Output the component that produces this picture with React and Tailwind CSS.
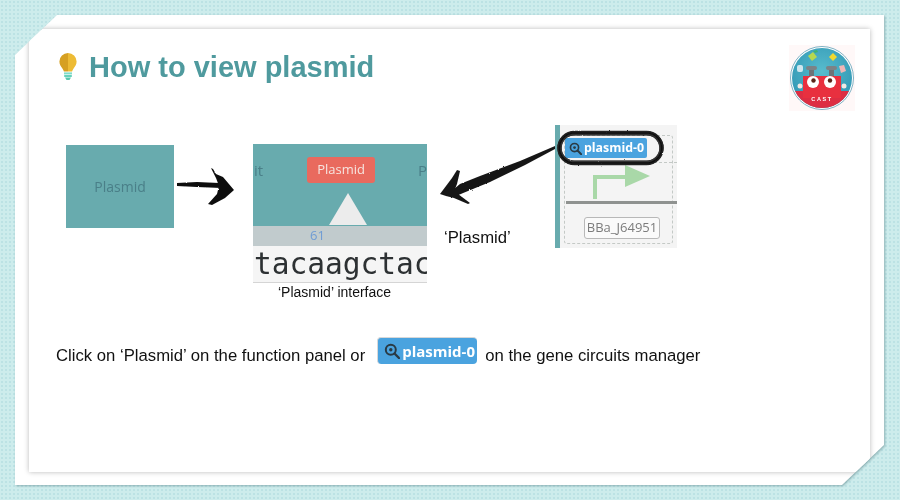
// How to view plasmid: tutorial slide with a framed white panel

const sans = 'font-["Liberation_Sans",Arial,sans-serif]';

function Bulb() {
  return (
    <svg viewBox="0 0 18 28" className="w-[18px] h-[28px] shrink-0">
      <path d="M9 0a8.600 8.600 0 0 0-8.600 8.600c0 3.200 1.700 5 3 6.800.9 1.200 1.300 2.300 1.500 3.200H9z" fill="#d6a022" />
      <path d="M9 0a8.600 8.600 0 0 1 8.600 8.600c0 3.200-1.700 5-3 6.800-.9 1.200-1.300 2.300-1.500 3.200H9z" fill="#edbb35" />
      <rect x="5" y="19.400" width="8" height="2" fill="#7fdcc8" />
      <rect x="5.200" y="22" width="7.600" height="2" fill="#67d2bb" />
      <path d="M6 24.600h6L10.500 27h-3z" fill="#58c8ae" />
    </svg>
  );
}

function Logo() {
  return (
    <svg viewBox="0 0 66 66" className="w-[66px] h-[66px] shrink-0 bg-[#fff8f8]">
      <defs>
        <clipPath id="logo-disc">
          <circle cx="33" cy="33" r="30" />
        </clipPath>
        <radialGradient id="logo-sky" cx="0.5" cy="0.4" r="0.6">
          <stop offset="0" stopColor="#58bccd" />
          <stop offset="1" stopColor="#2f95b3" />
        </radialGradient>
      </defs>
      <circle cx="33" cy="33" r="31.500" fill="#fff" stroke="#7fb2c4" strokeWidth="1" />
      <g clipPath="url(#logo-disc)">
        <rect width="66" height="66" fill="url(#logo-sky)" />
        <rect y="46" width="66" height="20" fill="#dd2e43" />
        <rect x="20" y="24" width="5" height="10" fill="#6d7378" />
        <rect x="40" y="24" width="5" height="10" fill="#6d7378" />
        <rect x="17" y="21" width="11" height="4" rx="2" fill="#7c8286" />
        <rect x="37" y="21" width="11" height="4" rx="2" fill="#7c8286" />
        <rect x="14" y="31" width="38" height="22" fill="#e8303f" />
        <circle cx="11" cy="41" r="2.500" fill="#f1e9e4" />
        <circle cx="55" cy="41" r="2.500" fill="#f1e9e4" />
        <circle cx="24" cy="37" r="6" fill="#fff" />
        <circle cx="41" cy="37" r="6" fill="#fff" />
        <circle cx="24.500" cy="35.500" r="2.200" fill="#5a2418" />
        <circle cx="41" cy="35.500" r="2.200" fill="#5a2418" />
        <path d="M19 11l5-4 4 5-5 4z" fill="#b5d84f" />
        <path d="M24 6l4-1 1 2-3 1z" fill="#3cb371" />
        <path d="M40 12l4-4 4 4-4 4z" fill="#f1d92f" />
        <path d="M50 21l5-1 2 6-5 2z" fill="#efb6b6" />
        <rect x="8" y="20" width="6" height="7" rx="2" fill="#cfe6ee" />
      </g>
      <text x="33" y="56" textAnchor="middle" fontSize="5.500" fontWeight="700" letterSpacing="1.600" fill="#fff" fontFamily="Liberation Sans, sans-serif">
        CAST
      </text>
    </svg>
  );
}

// Shared roughness for the hand-drawn marks
function RoughFilter({ id }) {
  return (
    <filter id={id} x="-10%" y="-10%" width="120%" height="120%">
      <feTurbulence type="fractalNoise" baseFrequency="0.35" numOctaves="2" seed="4" />
      <feDisplacementMap in="SourceGraphic" scale="1.800" />
      <feGaussianBlur stdDeviation="0.3" />
    </filter>
  );
}

function ArrowRight() {
  return (
    <svg viewBox="0 0 60 42" className="w-[60px] h-[42px] shrink-0 mt-[40px] ml-[3px]">
      <defs>
        <RoughFilter id="rough-a" />
      </defs>
      <g filter="url(#rough-a)" fill="#111">
        <path d="M0 18l20-1 22 1 3 2-1 3-24-1-20-1z" />
        <path d="M34 3l2 1 3 5 7 3 11 13-9 8-13 7-4-1 9-10 2-8-3-8z" />
      </g>
    </svg>
  );
}

function ArrowLeft() {
  return (
    <svg viewBox="0 0 116 60" className="absolute left-[-115px] top-[21px] w-[116px] h-[60px]">
      <defs>
        <RoughFilter id="rough-b" />
      </defs>
      <g filter="url(#rough-b)" fill="#161616">
        <path d="M115 0L80 15 40 30 20 38l-6 5 2 7 12-5 22-9 35-17 30-16z" />
        <path d="M0 48l12-16 5-8 3 1-3 13-2 5 3 5 12 9-2 1-14-6-8-2z" />
      </g>
    </svg>
  );
}

function LensIcon({ size }) {
  return (
    <svg viewBox="0 0 16 16" width={size} height={size} className="shrink-0">
      <circle cx="6.800" cy="6.800" r="5" fill="none" stroke="#2a3a44" strokeWidth="2" />
      <circle cx="6.800" cy="6.800" r="1.700" fill="#2a3a44" />
      <path d="M10.500 10.500L15 15" stroke="#2a3a44" strokeWidth="2.400" strokeLinecap="round" />
    </svg>
  );
}

function GeneCard() {
  return (
    <div className="relative w-[122px] h-[123px] bg-[#f4f4f4] border-l-[5px] border-[#68abae] blur-[0.4px] overflow-hidden">
      <div className="absolute inset-x-[4px] top-[10px] bottom-[4px] border border-dashed border-[#c4c9c6] rounded-[3px]" />
      <div className="absolute left-[4px] right-0 top-[37px] border-t border-dashed border-[#c4c9c6]" />
      <div className="relative ml-[5px] mt-[13px] w-[82px] h-[20px] bg-[#4aa3df] flex items-center gap-[2px] pl-[4px] text-white text-[12.400px] font-bold whitespace-nowrap font-['Open_Sans',sans-serif] rounded-[2px]">
        <LensIcon size={13} />
        <span>plasmid-0</span>
      </div>
      <svg viewBox="0 0 117 50" className="relative w-[117px] h-[50px]">
        <path d="M35 41V19h30" fill="none" stroke="#a9d8a8" strokeWidth="4" />
        <path d="M65 7l25 11-25 11z" fill="#a9d8a8" />
        <rect x="6" y="43" width="111" height="3" fill="#8f9290" />
      </svg>
      <div className="relative ml-[24px] mt-[9px] w-[76px] h-[22px] border border-[#b8b8b8] rounded-[3px] flex items-center justify-center text-[13px] text-[#7c7c7c] bg-[#fafafa] font-['Open_Sans',sans-serif]">
        BBa_J64951
      </div>
    </div>
  );
}

function Scribble() {
  return (
    <svg viewBox="0 0 112 38" className="absolute left-0 top-[4px] w-[112px] h-[38px]">
      <defs>
        <RoughFilter id="rough-c" />
      </defs>
      <g filter="url(#rough-c)" fill="none">
        <rect x="4.500" y="4.500" width="102" height="29" rx="14.500" stroke="#111" strokeWidth="4" />
        <rect x="3" y="2.500" width="105" height="33" rx="16.500" stroke="#222" strokeWidth="1.500" />
        <rect x="6" y="5.500" width="99" height="27" rx="13.500" stroke="#333" strokeWidth="1.500" />
      </g>
    </svg>
  );
}

export default function App() {
  return (
    <div className={`w-[900px] h-[500px] overflow-hidden pt-[15px] pl-[15px] ${sans} bg-[#cdecec] bg-[radial-gradient(circle,#bce2e4_1.100px,transparent_1.300px)] bg-[length:4px_4px]`}>
      <div className="w-[869px] h-[470px] drop-shadow-[1px_1px_1px_rgba(90,130,135,0.55)]">
        {/* white mat with two clipped corners */}
        <div className="w-full h-full bg-white p-[14px] [clip-path:polygon(42px_0,100%_0,100%_430px,827px_100%,0_100%,0_40px)]">
          <div className="w-[841px] h-[443px] bg-white shadow-[0_0_5px_rgba(0,0,0,0.28)] flex flex-col">
            {/* Title row */}
            <div className="flex items-start pl-[30px] pt-[16px] pr-[15px] h-[96px]">
              <div className="flex items-center mt-[4px]">
                <Bulb />
                <h1 className="ml-[12px] text-[29px] leading-[36px] font-bold text-[#4f9a9e]">How to view plasmid</h1>
              </div>
              <div className="ml-auto">
                <Logo />
              </div>
            </div>

            {/* Diagram row */}
            <div className="flex items-start pl-[37px]">
              <div className="w-[108px] h-[83px] mt-[20px] bg-[#68abae] flex items-center justify-center text-[14px] text-[#4a7f88] font-['Open_Sans',sans-serif] blur-[0.4px]">
                Plasmid
              </div>

              <ArrowRight />

              <div className="w-[174px] mt-[19px] ml-[16px] flex flex-col items-center">
                <div className="w-full h-[82px] bg-[#68abae] overflow-hidden flex flex-col items-center blur-[0.4px]">
                  <div className="w-full mt-[13px] flex items-center justify-between text-[15px] text-[#4a7f88] font-['Open_Sans',sans-serif]">
                    <span className="ml-[1px]">it</span>
                    <span className="ml-[1px] w-[68px] h-[26px] bg-[#e96a5e] rounded-[3px] text-[13px] text-[#f6e4df] flex items-center justify-center">
                      Plasmid
                    </span>
                    <span className="mr-[0px]">P</span>
                  </div>
                  <svg viewBox="0 0 38 33" className="w-[38px] h-[33px] mt-[10px] ml-[16px] shrink-0">
                    <path d="M19 0l19 32H0z" fill="#ececec" />
                  </svg>
                </div>
                <div className="w-full h-[20px] bg-[#c1cbcd] flex items-center pl-[57px] text-[13px] text-[#6f9cd4] font-['Open_Sans',sans-serif] blur-[0.4px]">
                  61
                </div>
                <div className="w-full h-[37px] bg-[#f5f5f5] border-b border-[#d5d5d5] pl-[1px] overflow-hidden whitespace-nowrap text-[29.500px] leading-[36px] text-[#2d3133] font-['DejaVu_Sans_Mono',monospace] blur-[0.4px]">
                  tacaagctac
                </div>
                <p className="mt-[1px] text-[14px] leading-[16px] text-[#111] w-full pl-[25px]">‘Plasmid’ interface</p>
              </div>

              <div className="ml-[17px] w-[111px] h-[123px] flex items-end">
                <p className="text-[16.700px] leading-[18px] text-[#111] mb-[1px]">‘Plasmid’</p>
              </div>

              <div className="relative">
                <GeneCard />
                <Scribble />
                <ArrowLeft />
              </div>
            </div>

            {/* Instruction row */}
            <div className="flex items-center pl-[27px] mt-[37px] text-[16.700px] text-[#111]">
              <span>Click on ‘Plasmid’ on the function panel or</span>
              <div className="ml-[12px] mb-[10px] w-[100px] h-[27px] bg-[#4aa3df] rounded-[4px] flex items-center gap-[2px] pl-[6px] text-white text-[15px] font-bold whitespace-nowrap font-['Open_Sans',sans-serif] border-l border-t border-[#d8d8d8]">
                <LensIcon size={16} />
                <span>plasmid-0</span>
              </div>
              <span className="ml-[8px]">on the gene circuits manager</span>
            </div>
          </div>
        </div>
      </div>
    </div>
  );
}
